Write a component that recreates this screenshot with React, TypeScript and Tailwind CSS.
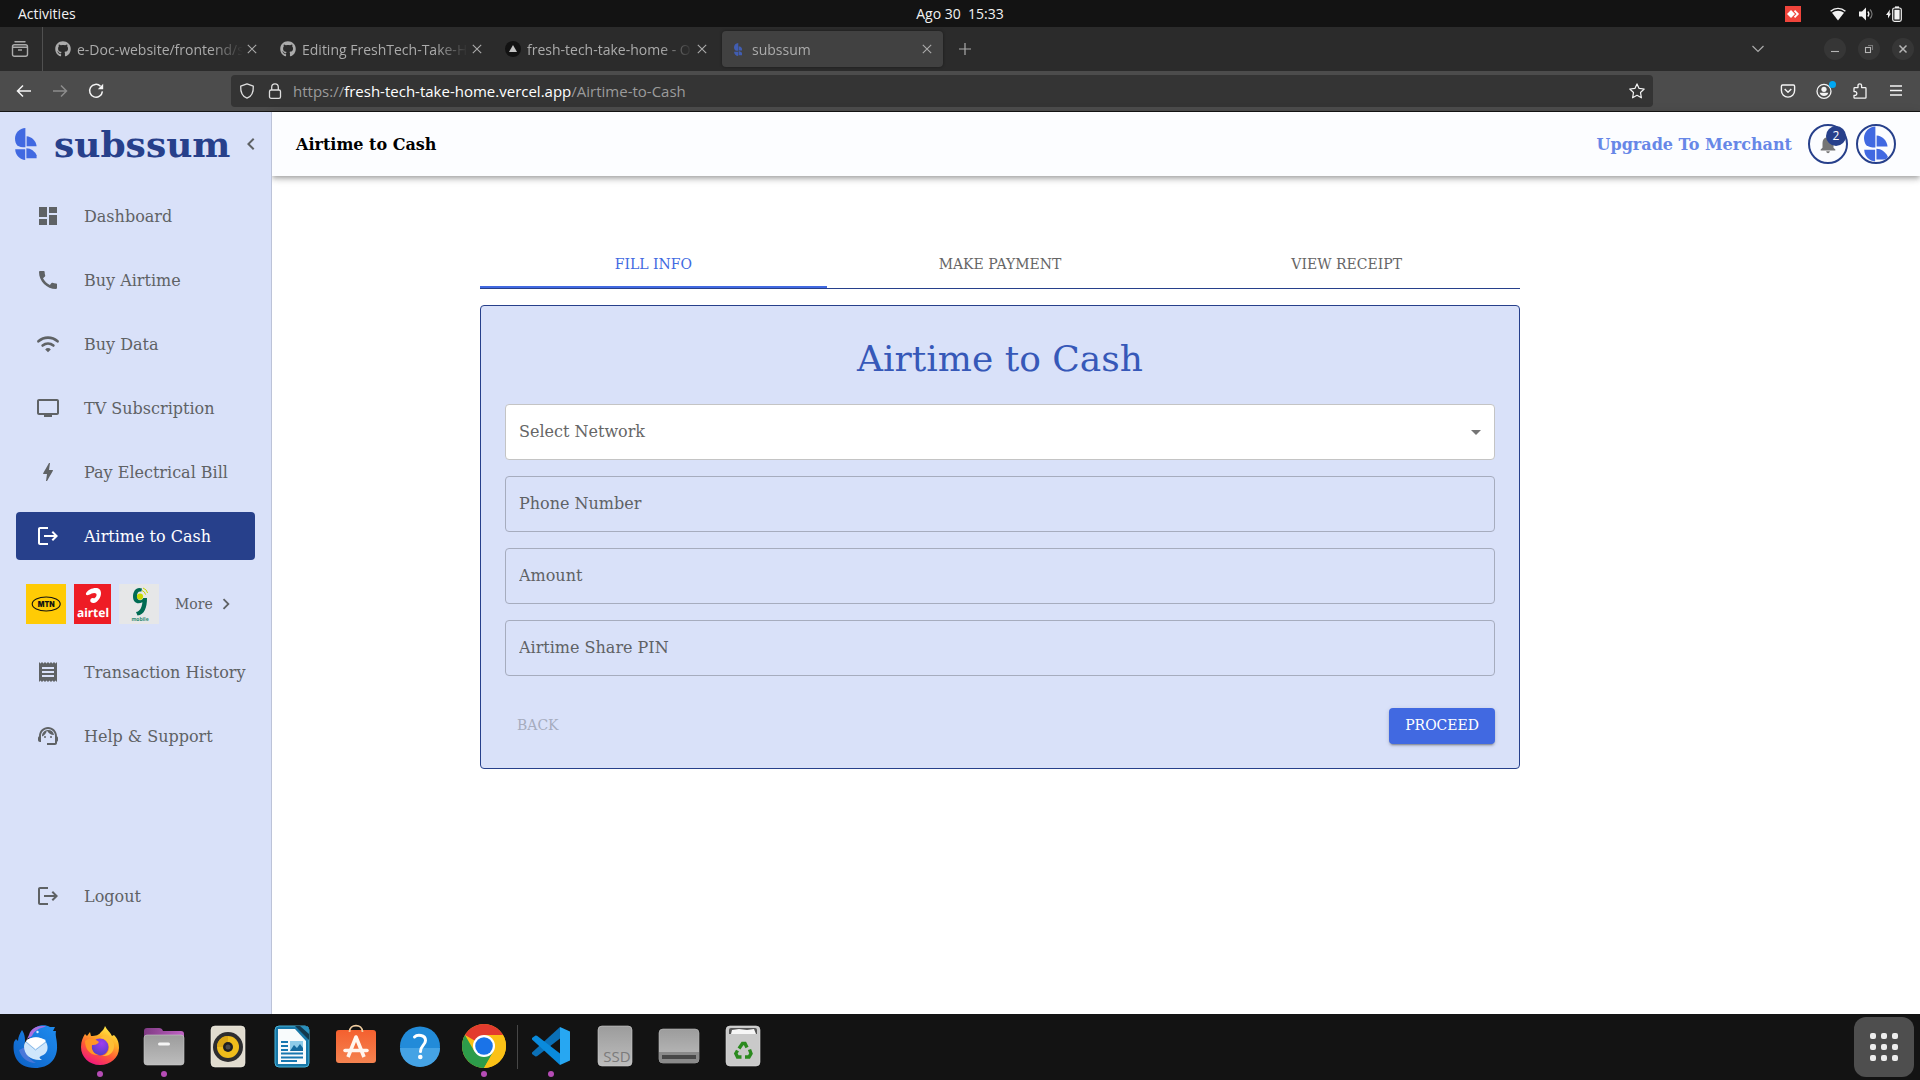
import React from "react";
import {
  MdBolt, MdCall, MdChevronLeft, MdChevronRight, MdDashboard, MdLogout,
  MdNotifications, MdReceipt, MdSupportAgent, MdTv, MdArrowDropDown,
} from "react-icons/md";
import { FaGithub } from "react-icons/fa";

type SvgProps = { className?: string };

function SubssumMark({ className }: SvgProps) {
  return (
    <svg viewBox="0 0 22 32" className={className} fill="#4169e1" aria-hidden="true">
      <path d="M10.4 0V19.3C7 19.3 4 18.8 2.2 17.2C.8 15.6 0 13 0 10.4C0 5 4.5 .3 10.4 0Z" />
      <path d="M11.6 8.2C16.5 8.6 21 12.5 21.6 18.2H11.6Z" />
      <path d="M.2 21.3H10.2V32C5 31.6.4 27.6.2 21.3Z" />
      <path d="M11.4 20.3C15.8 20.3 20 23.6 21.6 27.2V30.3H11.4Z" />
    </svg>
  );
}

function WifiArcs() {
  return (
    <svg viewBox="0 0 24 24" className="size-6" fill="none" stroke="currentColor" strokeWidth="2.6" strokeLinecap="round" aria-hidden="true">
      <path d="M2.4 9.3C8 4.4 16 4.4 21.6 9.3" />
      <path d="M6.6 13.5C9.8 10.9 14.2 10.9 17.4 13.5" />
      <path d="M9.2 17.4C10.8 15.6 13.2 15.6 14.8 17.4L12 20.200Z" fill="currentColor" stroke="none" />
    </svg>
  );
}

/* ---------- Desktop top bar ---------- */

function TopBar() {
  return (
    <header className="grid h-[27px] grid-cols-3 items-center bg-[#131313] px-[18px] text-sm leading-5 text-[#f2f2f2]">
      <button className="justify-self-start">Activities</button>
      <time className="justify-self-center whitespace-pre">Ago 30  15:33</time>
      <div className="flex items-center justify-self-end">
        <svg viewBox="0 0 16 16" className="mr-[29px] size-4" aria-label="Remote desktop">
          <rect width="16" height="16" fill="#ef443b" />
          <path d="M6 4L10 8L6 12L2 8Z" fill="#fff" />
          <path d="M9.500 4.700L12.800 8L9.500 11.300" fill="none" stroke="#fff" strokeWidth="1.8" />
        </svg>
        <svg viewBox="0 0 16 14" className="mr-3 h-[14px] w-4" aria-label="Wi-Fi">
          <path d="M.6 4.2C5 .4 11 .4 15.400 4.200" fill="none" stroke="#f2f2f2" strokeWidth="1.4" />
          <path d="M2 5.800C5.600 2.900 10.400 2.900 14 5.800L8 13.400Z" fill="#f2f2f2" />
        </svg>
        <svg viewBox="0 0 16 14" className="mr-3 h-[14px] w-4" fill="none" aria-label="Volume">
          <path d="M1 4.5H4L8 .5V13.5L4 9.5H1Z" fill="#f2f2f2" />
          <path d="M9.8 4.5C11.1 6 11.1 8 9.8 9.5" stroke="#f2f2f2" strokeWidth="1.3" />
          <path d="M12 2.5C14.6 5.2 14.6 8.8 12 11.5" stroke="#777" strokeWidth="1.3" />
        </svg>
        <svg viewBox="0 0 16 16" className="size-4" fill="none" aria-label="Battery charging">
          <path d="M4 3.5L0 9H2V12.5L5 7.5H3.5Z" fill="#f2f2f2" />
          <rect x="6.7" y="2" width="8.6" height="13.3" rx="1.8" stroke="#f2f2f2" strokeWidth="1.2" />
          <rect x="8.4" y="3.8" width="5.2" height="9.7" fill="#f2f2f2" />
          <rect x="9" y="0.4" width="4" height="1.6" fill="#f2f2f2" />
        </svg>
      </div>
    </header>
  );
}

/* ---------- Browser window ---------- */

function CloseGlyph() {
  return (
    <svg viewBox="0 0 10 10" className="size-[10px]" fill="none" stroke="currentColor" strokeWidth="1.1" aria-hidden="true">
      <path d="M.8.8L9.2 9.2M9.2.8L.8 9.2" />
    </svg>
  );
}

type TabProps = { icon: React.ReactNode; title: string; active?: boolean };

function BrowserTab({ icon, title, active }: TabProps) {
  return (
    <div className={`flex h-9 w-[221px] items-center rounded pl-2 pr-[11px] ${active ? "bg-[#414141] shadow-[0_0_3px_rgba(0,0,0,0.4)]" : ""}`}>
      <span className="mr-[6px] flex size-4 shrink-0 items-center justify-center">{icon}</span>
      <span className="min-w-0 flex-1 overflow-hidden whitespace-nowrap pt-0.5 [mask-image:linear-gradient(to_left,transparent,black_32px)]">{title}</span>
      <button aria-label={`Close ${title}`} className="ml-1 shrink-0"><CloseGlyph /></button>
    </div>
  );
}

function WindowButton({ label, children }: { label: string; children: React.ReactNode }) {
  return (
    <button aria-label={label} className="flex size-[22px] items-center justify-center rounded-full bg-[#363636]">
      <svg viewBox="0 0 10 10" className="size-[10px]" fill="none" stroke="#b5b5b5" strokeWidth="1.1">{children}</svg>
    </button>
  );
}

function TabStrip() {
  return (
    <div className="flex h-11 items-center bg-[#2b2b2b] text-sm text-[#ababab]">
      <button aria-label="Recent browsing" className="flex h-full w-[43px] items-center justify-center border-r border-[#505050] pr-0.5">
        <svg viewBox="0 0 18 16" className="h-4 w-[18px]" fill="none" stroke="currentColor" strokeWidth="1.4">
          <path d="M4 .8H14" strokeLinecap="round" />
          <path d="M1.500 6.200V5.700Q1.500 3.700 3.500 3.700H14.500Q16.500 3.700 16.500 5.700V13.200Q16.500 15.200 14.500 15.200H3.500Q1.500 15.200 1.500 13.200V6.200H16.500" />
          <path d="M7 9H11" />
        </svg>
      </button>
      <div className="ml-1 flex gap-1">
        <BrowserTab icon={<FaGithub className="size-4" />} title="e-Doc-website/frontend/s" />
        <BrowserTab icon={<FaGithub className="size-4" />} title="Editing FreshTech-Take-H" />
        <BrowserTab
          icon={<svg viewBox="0 0 16 16" className="size-4"><circle cx="8" cy="8" r="8" fill="#121212" /><path d="M8 4L12 11H4Z" fill="#c4c4c4" /></svg>}
          title="fresh-tech-take-home - O"
        />
        <BrowserTab icon={<SubssumMark className="h-[13px] opacity-70" />} title="subssum" active />
      </div>
      <button aria-label="New tab" className="ml-4">
        <svg viewBox="0 0 12 12" className="size-3" stroke="currentColor" strokeWidth="1.2"><path d="M6 0V12M0 6H12" /></svg>
      </button>
      <button aria-label="List all tabs" className="ml-auto mr-[60px]">
        <svg viewBox="0 0 12 8" className="h-2 w-3" fill="none" stroke="currentColor" strokeWidth="1.2"><path d="M.5 1L6 6.5L11.5 1" /></svg>
      </button>
      <div className="flex gap-3 pr-[6px]">
        <WindowButton label="Minimise"><path d="M1 7.5H9" /></WindowButton>
        <WindowButton label="Restore">
          <rect x="1.5" y="3.5" width="5" height="5" /><path d="M4 1.5H8.5V6" stroke="#777" />
        </WindowButton>
        <WindowButton label="Close window"><path d="M1.5 1.5L8.5 8.5M8.5 1.5L1.5 8.5" strokeWidth="1.5" /></WindowButton>
      </div>
    </div>
  );
}

function UrlBar() {
  return (
    <div className="flex h-[41px] items-center border-b border-[#161616] bg-[#4c4c4c] pl-4 text-[#f4f4f4]">
      <div className="flex w-[215px] gap-5">
        <button aria-label="Back">
          <svg viewBox="0 0 16 16" className="size-4" fill="none" stroke="currentColor" strokeWidth="1.5"><path d="M15 8H1.5M7 2.5L1.5 8L7 13.5" /></svg>
        </button>
        <button aria-label="Forward" disabled className="text-[#8c8c8c]">
          <svg viewBox="0 0 16 16" className="size-4" fill="none" stroke="currentColor" strokeWidth="1.5"><path d="M1 8H14.5M9 2.5L14.5 8L9 13.5" /></svg>
        </button>
        <button aria-label="Reload">
          <svg viewBox="0 0 16 16" className="size-4" fill="none" stroke="currentColor" strokeWidth="1.5">
            <path d="M12.5 3.2A6.4 6.4 0 1 0 14.4 8.4" /><path d="M15.2 .8V6.2H9.8Z" fill="currentColor" stroke="none" />
          </svg>
        </button>
      </div>
      <div className="flex h-8 min-w-0 flex-1 items-center rounded bg-[#343434] px-2">
        <svg viewBox="0 0 16 16" className="size-4 shrink-0" fill="none" stroke="#dedede" strokeWidth="1.3" strokeLinejoin="round" aria-label="Tracking protection">
          <path d="M8 .9L14.3 3.2C14.6 9 12.8 13.3 8 15.2C3.2 13.3 1.4 9 1.7 3.2Z" />
        </svg>
        <svg viewBox="0 0 16 16" className="ml-3 size-4 shrink-0" fill="none" stroke="#dedede" strokeWidth="1.3" aria-label="Secure connection">
          <rect x="2.5" y="7" width="11" height="8.3" rx="1.6" /><path d="M4.7 7V4.2A3.3 3.3 0 0 1 11.3 4.2V7" />
        </svg>
        <a href="#" className="ml-[10px] flex-1 truncate text-[15px] leading-5 text-[#9b9b9b]">
          https://<span className="text-white">fresh-tech-take-home.vercel.app</span>/Airtime-to-Cash
        </a>
        <button aria-label="Bookmark this page">
          <svg viewBox="0 0 16 16" className="size-4" fill="none" stroke="currentColor" strokeWidth="1.2" strokeLinejoin="round">
            <path d="M8 .9L10.1 5.4L15.2 6L11.5 9.5L12.4 14.8L8 12.3L3.6 14.8L4.5 9.5L.8 6L5.9 5.4Z" />
          </svg>
        </button>
      </div>
      <div className="ml-[127px] flex items-center gap-5 pr-4">
        <button aria-label="Save to Pocket">
          <svg viewBox="0 0 16 16" className="size-4" fill="none" stroke="currentColor" strokeWidth="1.4" strokeLinejoin="round">
            <path d="M2.6 2H13.4Q14.6 2 14.6 3.2V7.5A6.6 6.6 0 0 1 1.4 7.5V3.2Q1.4 2 2.6 2Z" /><path d="M4.7 6L8 9.2L11.3 6" />
          </svg>
        </button>
        <button aria-label="Account" className="relative">
          <svg viewBox="0 0 16 16" className="size-4" fill="none">
            <circle cx="8" cy="8.3" r="7" stroke="currentColor" strokeWidth="1.3" /><circle cx="8" cy="6.3" r="2.6" fill="currentColor" />
            <path d="M3.7 9.8H12.3C11.8 12 10 13 8 13C6 13 4.2 12 3.7 9.8Z" fill="currentColor" />
          </svg>
          <span className="absolute -right-1 -top-0.5 size-[7px] rounded-full bg-[#00a8f3]" />
        </button>
        <button aria-label="Extensions">
          <svg viewBox="0 0 16 16" className="size-4" fill="none" stroke="currentColor" strokeWidth="1.3" strokeLinejoin="round">
            <path d="M2 7V5.4Q2 4.6 2.8 4.6H6V2.6A1.8 1.8 0 0 1 9.6 2.6V4.6H13.2Q14 4.6 14 5.4V14.5Q14 15.2 13.2 15.2H2.8Q2 15.2 2 14.5V12.3H3.6A2 2 0 0 0 3.6 8.6H2V7" />
          </svg>
        </button>
        <button aria-label="Menu">
          <svg viewBox="0 0 16 16" className="size-4" stroke="currentColor" strokeWidth="1.3"><path d="M2 3H14M2 7.5H14M2 12H14" /></svg>
        </button>
      </div>
    </div>
  );
}

/* ---------- Site ---------- */

type NavItemProps = { icon: React.ReactNode; label: string; active?: boolean };

function NavItem({ icon, label, active }: NavItemProps) {
  return (
    <a href="#" className={`flex h-12 items-center gap-6 whitespace-nowrap rounded pl-5 ${active ? "bg-[#27408b] text-white" : "text-[#5f6265]"}`}>
      {icon}
      <span className="pt-0.5">{label}</span>
    </a>
  );
}

function NetworkLogos() {
  return (
    <div className="flex h-10 items-center gap-2 pl-[10px] text-[#5f6265]">
      <svg viewBox="0 0 40 40" className="size-10" aria-label="MTN">
        <rect width="40" height="40" fill="#ffcb05" />
        <ellipse cx="20.2" cy="20" rx="14" ry="7" fill="none" stroke="#111" strokeWidth="1.1" />
        <text x="20.2" y="22.6" textAnchor="middle" fontFamily="Inter, sans-serif" fontWeight="900" fontSize="7" fill="#111">MTN</text>
      </svg>
      <svg viewBox="0 0 37 40" className="h-10 w-[37px]" aria-label="airtel">
        <rect width="37" height="40" fill="#ee1c25" />
        <path d="M12 9.2C13.5 5.5 20 3 24 4.2C28.600 6 27.800 13.500 23 17.400C20.500 19.400 17.200 19.400 16.400 17.600C15.600 15 18 13.400 20 14.400C22 13.800 23.400 11 22 9.600C20.500 8.200 17.600 9.400 15 10.800C13 11.800 11.400 10.800 12 9.200Z" fill="#fff" />
        <text x="19" y="33" textAnchor="middle" fontFamily="Noto Sans, sans-serif" fontWeight="700" fontSize="12" textRendering="geometricPrecision" fill="#fff">airtel</text>
      </svg>
      <svg viewBox="0 0 40 40" className="size-10" aria-label="9mobile">
        <rect width="40" height="40" fill="#e6e7e8" />
        <path d="M23 4.500C17.500 2.200 14 7 14 12.500C14 18.500 18.500 20.800 23.400 18.200C22.800 23.500 21 27.400 17 28L18.500 31.400C25.500 31 28 23.500 28 14H24.200C23.500 16.800 18 17.500 18 12.300C18 8.600 19.600 6.800 22.400 7.600Z" fill="#006b53" />
        <circle cx="21" cy="12.6" r="3.1" fill="#c8d800" />
        <path d="M23 6.5Q26 7.6 26.6 10.6M24 4Q27.8 5.4 28.6 9" fill="none" stroke="#c8d800" strokeWidth="1" />
        <text x="21" y="37" textAnchor="middle" fontFamily="Open Sans, sans-serif" fontWeight="700" fontSize="5" fill="#2e8b72">mobile</text>
      </svg>
      <a href="#" className="ml-2 flex items-center gap-[2px] text-sm">
        More <MdChevronRight className="size-[22px]" />
      </a>
    </div>
  );
}

function Sidebar() {
  return (
    <aside className="relative z-10 flex w-[272px] shrink-0 flex-col border-r border-[#bcc3d8] bg-[#d9e1f9]">
      <div className="flex h-16 items-center pl-[15px]">
        <SubssumMark className="h-8 w-[22px]" />
        <span className="ml-[17px] flex-1 text-4xl font-bold text-[#27408b]">subssum</span>
        <button aria-label="Collapse sidebar" className="mr-2 text-[#5f6265]"><MdChevronLeft className="size-6" /></button>
      </div>
      <nav className="mt-4 flex flex-col gap-4 pl-4 pr-4">
        <NavItem icon={<MdDashboard className="size-6" />} label="Dashboard" />
        <NavItem icon={<MdCall className="size-6" />} label="Buy Airtime" />
        <NavItem icon={<WifiArcs />} label="Buy Data" />
        <NavItem icon={<MdTv className="size-6" />} label="TV Subscription" />
        <NavItem icon={<MdBolt className="size-6" />} label="Pay Electrical Bill" />
        <NavItem icon={<MdLogout className="size-6" />} label="Airtime to Cash" active />
        <div className="py-2"><NetworkLogos /></div>
        <NavItem icon={<MdReceipt className="size-6" />} label="Transaction History" />
        <NavItem icon={<MdSupportAgent className="size-6" />} label="Help & Support" />
        <div className="pt-24"><NavItem icon={<MdLogout className="size-6" />} label="Logout" /></div>
      </nav>
    </aside>
  );
}

function PageHeader() {
  return (
    <header className="flex h-16 items-center bg-[#fcfdff] px-6 shadow-[0_2px_4px_-1px_rgba(0,0,0,0.2),0_4px_5px_0_rgba(0,0,0,0.14),0_1px_10px_0_rgba(0,0,0,0.12)]">
      <h1 className="pt-0.5 font-bold text-black">Airtime to Cash</h1>
      <a href="#" className="ml-auto pt-0.5 font-bold text-[#6787e7]">Upgrade To Merchant</a>
      <button aria-label="2 notifications" className="relative ml-4 flex size-10 items-center justify-center rounded-full border-2 border-[#27408b]">
        <MdNotifications className="size-[22px] text-[#757575]" />
        <span className="absolute right-0 top-0 flex size-5 items-center justify-center rounded-full bg-[#27408b] font-[Open_Sans,sans-serif] text-xs text-white">2</span>
      </button>
      <button aria-label="Profile" className="ml-2 flex size-10 items-center justify-center overflow-hidden rounded-full border-2 border-[#27408b]">
        <SubssumMark className="h-9 w-6" />
      </button>
    </header>
  );
}

function TextField({ label, type = "text" }: { label: string; type?: string }) {
  return (
    <input
      type={type}
      aria-label={label}
      placeholder={label}
      className="h-14 w-full rounded border border-[#a6acbe] bg-transparent px-[13px] pb-0.5 placeholder:text-[#5f6265] placeholder:opacity-100"
    />
  );
}

function AirtimeForm() {
  const steps = ["FILL INFO", "MAKE PAYMENT", "VIEW RECEIPT"];
  return (
    <div className="pr-48 pt-16">
      <section className="mx-auto w-full max-w-[1040px]">
        <div role="tablist" className="grid h-[49px] grid-cols-3 border-b border-[#27408b] text-sm">
          {steps.map((step, i) => (
            <button
              key={step}
              role="tab"
              aria-selected={i === 0}
              className={i === 0 ? "border-b-2 border-[#4169e1] pt-0.5 text-[#4169e1]" : "border-b-2 border-transparent pt-0.5 text-[#666]"}
            >
              {step}
            </button>
          ))}
        </div>
        <form className="mt-4 rounded border border-[#27408b] bg-[#d9e1f9] p-6">
          <h2 className="pb-[22px] pt-[6px] text-center text-4xl leading-[46px] text-[#3658b8]">Airtime to Cash</h2>
          <div className="flex flex-col gap-4">
            <div className="relative">
              <select aria-label="Select Network" className="block h-14 w-full appearance-none rounded border border-[#c4c4c4] bg-white px-[13px] text-[#666]">
                <option>Select Network</option>
              </select>
              <MdArrowDropDown className="pointer-events-none absolute right-[7px] top-4 size-6 text-[#757575]" />
            </div>
            <TextField label="Phone Number" type="tel" />
            <TextField label="Amount" />
            <TextField label="Airtime Share PIN" />
          </div>
          <div className="mt-8 flex h-9 items-center justify-between text-sm">
            <button type="button" disabled className="px-3 pb-0.5 text-[#a6acbe]">BACK</button>
            <button type="button" className="h-9 rounded bg-[#4169e1] px-4 pb-0.5 text-white shadow-[0_3px_1px_-2px_rgba(0,0,0,0.2),0_2px_2px_0_rgba(0,0,0,0.14),0_1px_5px_0_rgba(0,0,0,0.12)]">
              PROCEED
            </button>
          </div>
        </form>
      </section>
    </div>
  );
}

/* ---------- Dock ---------- */

function DockItem({ label, running, children }: { label: string; running?: boolean; children: React.ReactNode }) {
  return (
    <button aria-label={label} className="relative flex h-full w-16 items-center justify-center">
      <svg viewBox="0 0 48 48" className="size-12" fill="none">{children}</svg>
      {running && <span className="absolute bottom-[3px] left-[29px] size-[6px] rounded-full bg-[#b54cb5]" />}
    </button>
  );
}

function Dock() {
  return (
    <footer className="flex h-[66px] items-center bg-[#131313] pl-1 pr-[6px]">
      <svg width="0" height="0" className="absolute" aria-hidden="true">
        <defs>
          <linearGradient id="grey" x1="0" y1="0" x2="0" y2="1"><stop stopColor="#9c9c9c" /><stop offset="1" stopColor="#bdbdbd" /></linearGradient>
          <linearGradient id="bird" x1="1" y1="0" x2="0" y2="1"><stop stopColor="#1f8df0" /><stop offset="1" stopColor="#0c5fc4" /></linearGradient>
          <linearGradient id="fox" x1=".8" y1="0" x2=".3" y2="1"><stop stopColor="#fff44f" /><stop offset=".35" stopColor="#ffb027" /><stop offset=".65" stopColor="#ff5a36" /><stop offset="1" stopColor="#ef1480" /></linearGradient>
          <radialGradient id="globe" cx=".6" cy=".3" r=".8"><stop stopColor="#a03df0" /><stop offset="1" stopColor="#4b3fc0" /></radialGradient>
          <linearGradient id="bag" x1="0" y1="0" x2="0" y2="1"><stop stopColor="#f4602f" /><stop offset="1" stopColor="#f58350" /></linearGradient>
          <linearGradient id="violet" x1="0" y1="0" x2="1" y2="0"><stop stopColor="#7f3a83" /><stop offset="1" stopColor="#c063c4" /></linearGradient>
        </defs>
      </svg>
      <DockItem label="Thunderbird">
        <path d="M2 19C0 30 4 45 23 45C37 45 46 36 45 22C45 16 43 13 44 8L41 8L43 4L38 4C33 1 24 2 20 8C18 12 17 15 17 18L12 24C14 18 13 11 10 7C8 10 6 14 6 18L4 16Z" fill="url(#bird)" />
        <path d="M17 12C19 5 26 2 34 3.500C27 5 22 8 20 13L15 16Z" fill="#a86fe0" />
        <path d="M7 27C9 34 15 40 24 40C18 37 14 32 13 24Z" fill="#6f7fe0" opacity=".6" />
        <path d="M12 23C12 32 19 38 30 37C27 35 27 34 29 33C36 31 37 24 34 19C29 12 13 13 12 23Z" fill="#cfe6fb" />
        <path d="M14 18L23.500 26L34 18C29 13 19 13 14 18Z" fill="#fff" />
        <path d="M14 19L23.500 27L34 19" stroke="#8dbbe8" strokeWidth="1" />
        <circle cx="25.500" cy="9" r="1.200" fill="#d8ecff" />
      </DockItem>
      <DockItem label="Firefox" running>
        <path d="M29 3C31 7 34 9 36 13L38 12C42 16 43 20 43 25C43 35 34 42 24 42C13 42 5 34 5 24C5 18 7 14 9 11L11 13L14 9L15 13C20 13 23 12 25 9C27 7 28 6 29 3Z" fill="url(#fox)" />
        <circle cx="24" cy="24" r="8.500" fill="url(#globe)" />
        <path d="M9 18C13 14 20 16 23 19C21 22 18 22 16 22C15 27 18 31 23 32C14 33 9 26 9 18Z" fill="#ff9626" />
        <path d="M24 15C29 15 33 19 33 24C33 29 30 32 26 33C34 34 39 28 38 21C37 17 33 12 29 12Z" fill="#ffbf36" />
      </DockItem>
      <DockItem label="Files" running>
        <path d="M4 8Q4 5 7 5H19Q22 5 23 8H41Q44 8 44 11V24H4Z" fill="url(#violet)" />
        <rect x="4" y="12" width="40" height="30" rx="3" fill="url(#grey)" stroke="#c9c9c9" strokeWidth=".6" />
        <rect x="18" y="19.500" width="12" height="3" rx="1.500" fill="#f5f5f5" />
      </DockItem>
      <DockItem label="Rhythmbox">
        <rect x="7" y="3" width="34" height="41" rx="4" fill="#e1dccf" stroke="#f4f0e6" strokeWidth=".6" />
        <circle cx="24" cy="24" r="15" fill="#2d2d2f" /><circle cx="24" cy="24" r="11" fill="#f0bd1b" />
        <path d="M24 13A11 11 0 0 0 13 24H24Z" fill="#dba615" /><circle cx="24" cy="24" r="5" fill="#1f1f20" /><circle cx="24" cy="24" r="2.500" fill="#4a4a4a" />
      </DockItem>
      <DockItem label="LibreOffice Writer">
        <rect x="7" y="3" width="34" height="41" rx="4" fill="#1878a8" stroke="#48b3d8" />
        <path d="M10 6H27L38 18V41H10Z" fill="#f8fbfc" /><path d="M27 3H37Q41 3 41 7V17Z" fill="#13384d" /><path d="M32 3H37Q41 3 41 7V11Z" fill="#2a90bd" />
        <path d="M13 19H20M13 23H20M13 27H20M13 30.500H35M13 34.500H35M13 38H29" stroke="#1878b0" strokeWidth="1.800" />
        <rect x="22" y="18" width="13" height="10" fill="#8dcbe9" /><path d="M22 28L26 22L29 25L32 21L35 25V28Z" fill="#146a9e" />
      </DockItem>
      <DockItem label="Ubuntu Software">
        <rect x="4" y="7" width="40" height="33" rx="3" fill="url(#bag)" />
        <path d="M17.500 9C17.500 .5 30.500 .5 30.500 9" stroke="#f2cfa2" strokeWidth="1.800" />
        <path d="M16 34L24 14L32 34" stroke="#fff6ef" strokeWidth="3.600" strokeLinejoin="round" />
        <path d="M13 27.500H35" stroke="#fff6ef" strokeWidth="3.500" strokeLinecap="round" />
      </DockItem>
      <DockItem label="Help">
        <circle cx="24" cy="23.500" r="20" fill="#228bd9" /><path d="M4 25H44A20 19 0 0 1 4 25Z" fill="#45a3e5" />
        <path d="M18.500 14C21 11.500 29.500 11.500 29.500 17.500C29.500 22 24.500 22.500 24.500 28.500" stroke="#fff" strokeWidth="3" strokeLinecap="round" /><circle cx="24.300" cy="34" r="2.300" fill="#fff" />
      </DockItem>
      <DockItem label="Chrome" running>
        <g transform="translate(0 -1)">
          <circle cx="24" cy="24" r="22" fill="#fbc116" />
          <path d="M24 24L4.950 13A22 22 0 0 1 43.050 13Z" fill="#e33b2e" />
          <path d="M4.950 13A22 22 0 0 0 24 46L33.500 29.500L24 24L14.500 29.500Z" fill="#2d9c4a" />
          <path d="M24 13H43.050A22 22 0 0 1 24 46L33.500 29.500Z" fill="#fbc116" />
          <circle cx="24" cy="24" r="11" fill="#fff" /><circle cx="24" cy="24" r="8.800" fill="#1a73e8" />
        </g>
      </DockItem>
      <div className="mx-px h-11 w-px bg-[#474747]" />
      <DockItem label="Visual Studio Code" running>
        <path d="M33 4L43 8.500V37.500L33 42Z" fill="#27a7f2" />
        <path d="M33 4L5 29.500V31L8.500 33.500L10 33.300L33 15.500Z" fill="#0b70b7" />
        <path d="M33 42L5 16.500V15L8.500 12.500L10 12.700L33 30.500Z" fill="#0a8bdc" />
      </DockItem>
      <DockItem label="SSD volume">
        <rect x="7" y="3" width="34" height="40" rx="4" fill="url(#grey)" stroke="#cfcfcf" strokeWidth=".6" />
        <text x="26" y="39" textAnchor="middle" fontFamily="Open Sans, sans-serif" fontSize="15" fill="#7b7b7b">SSD</text>
      </DockItem>
      <DockItem label="Removable drive">
        <rect x="4" y="6" width="40" height="34" rx="4" fill="url(#grey)" stroke="#bbb" strokeWidth=".6" />
        <path d="M4 29H44V36Q44 40 40 40H8Q4 40 4 36Z" fill="#8a8a8a" /><rect x="7" y="32" width="34" height="4" fill="#484848" />
      </DockItem>
      <DockItem label="Trash">
        <rect x="7" y="3" width="34" height="40" rx="4" fill="#c9c9c9" stroke="#dedede" strokeWidth=".6" />
        <path d="M10 11V7Q10 5 12 5H36Q38 5 38 7V11Z" fill="#555" /><path d="M12 11L13 7L20 6L28 7L35 6L37 11Z" fill="#f6f6f6" />
        <g stroke="#2a8a1e" strokeWidth="3.400">
          <path d="M20 25.500L23.500 20.500H26L28 24.500" /><path d="M30.500 26.500L32 30.500L30 34H26" /><path d="M22.500 34H18.500L16.800 30.500L18.500 27.500" />
        </g>
      </DockItem>
      <button aria-label="Show applications" className="ml-auto flex size-[60px] items-center justify-center rounded-xl bg-[#4e4e4e]">
        <span className="grid grid-cols-3 gap-[5px]">
          {Array.from({ length: 9 }, (_, i) => <span key={i} className="size-[6px] rounded-[2px] bg-[#eee]" />)}
        </span>
      </button>
    </footer>
  );
}

export default function App() {
  return (
    <div className="flex min-h-screen flex-col font-[Open_Sans,Noto_Sans,sans-serif]">
      <TopBar />
      <TabStrip />
      <UrlBar />
      <div className="flex flex-1 bg-white font-[DejaVu_Serif,serif] text-base">
        <Sidebar />
        <main className="min-w-0 flex-1">
          <PageHeader />
          <AirtimeForm />
        </main>
      </div>
      <Dock />
    </div>
  );
}
